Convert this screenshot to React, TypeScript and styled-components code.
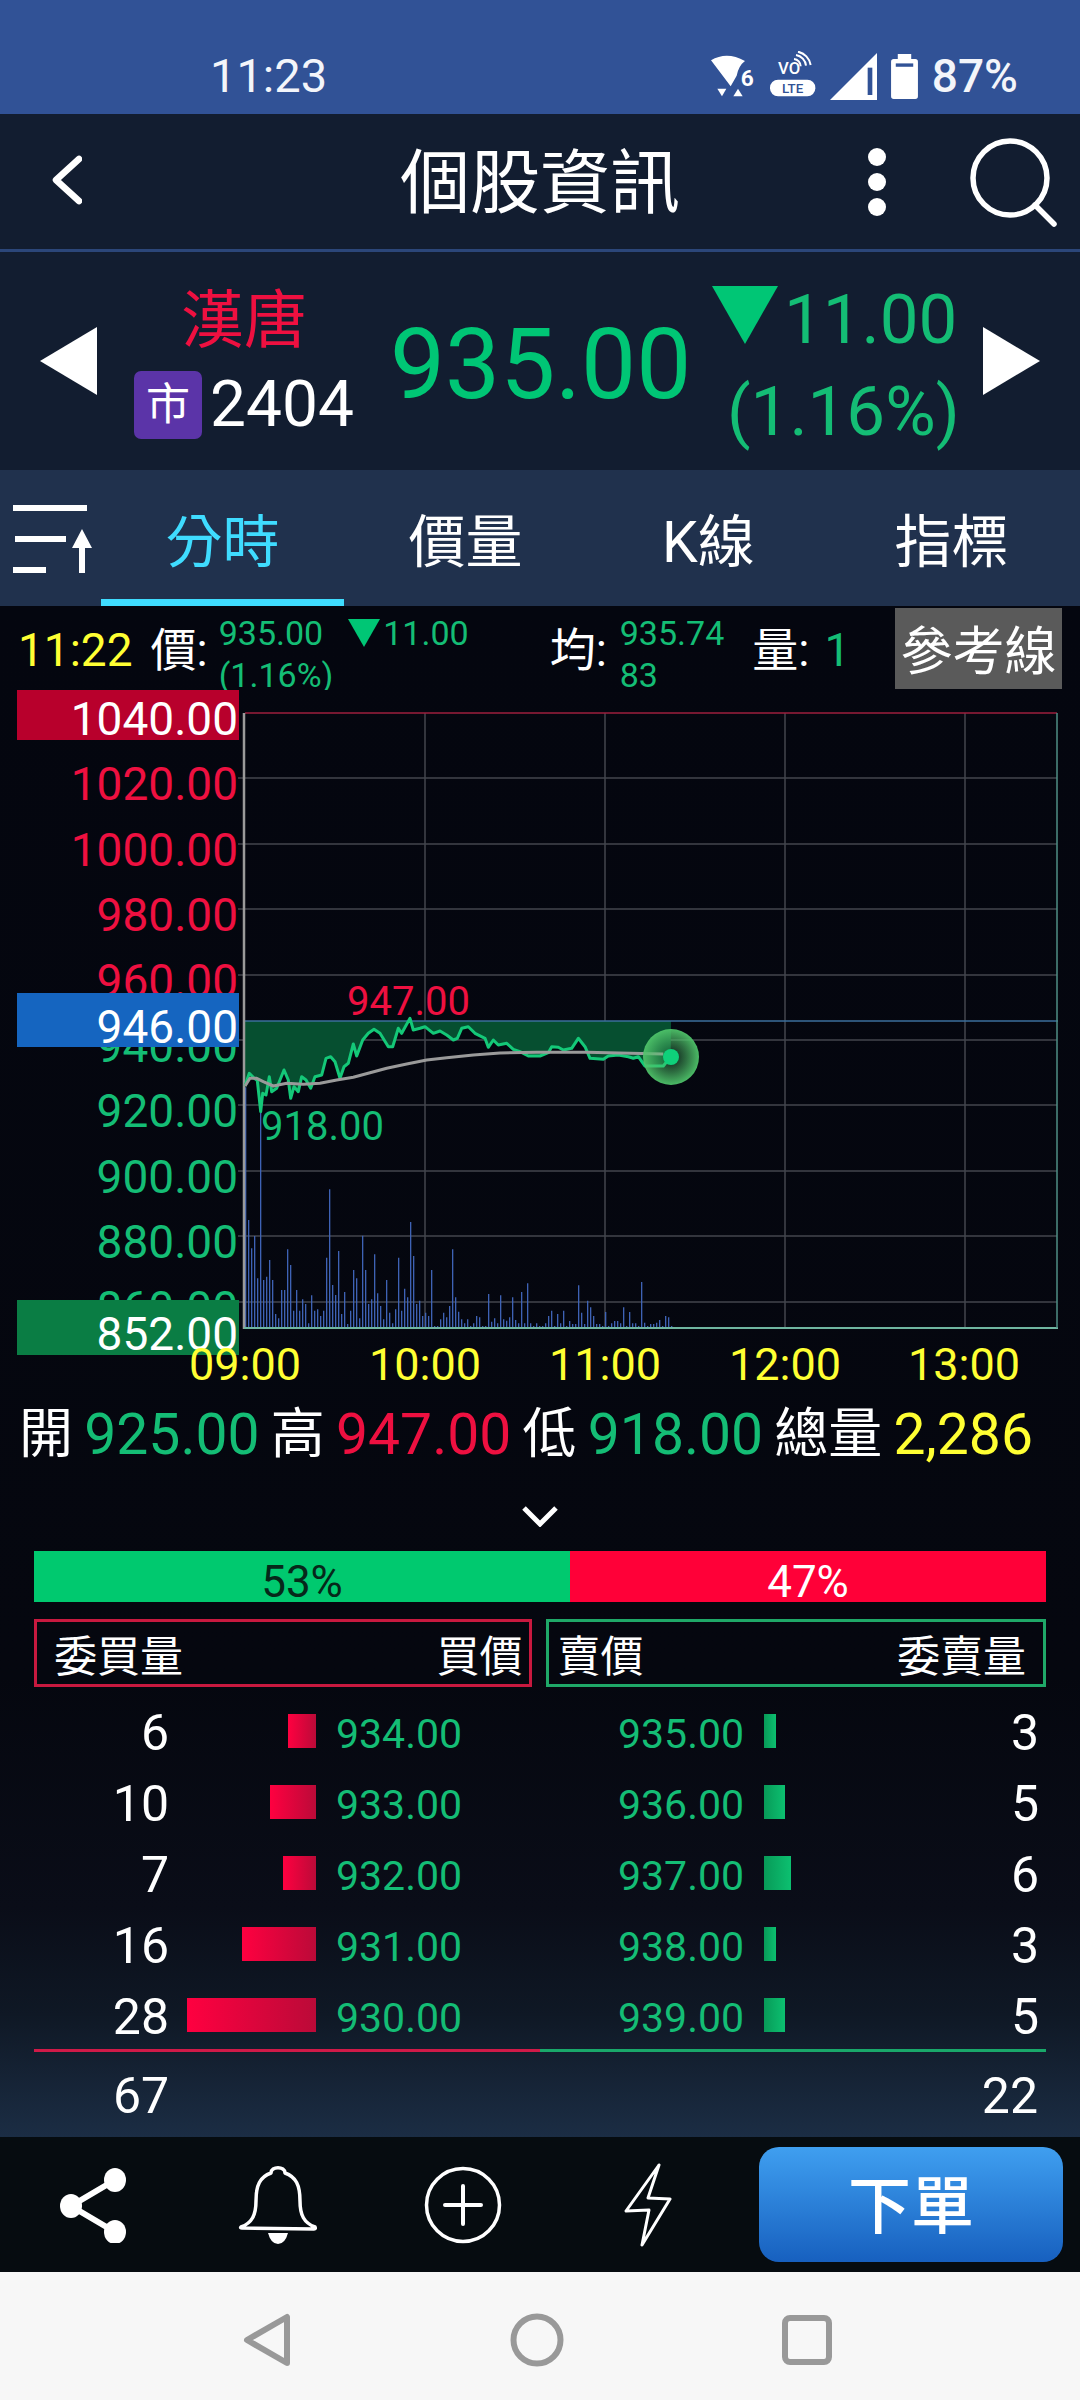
import React from "react";
import styled, { createGlobalStyle } from "styled-components";

const GlobalStyle = createGlobalStyle`
  html, body { margin: 0; padding: 0; background: #05070f; }
  * { box-sizing: border-box; }
  body { font-family: Roboto, "Noto Sans CJK TC", sans-serif; }
`;

const GREEN = "#00c675";
const SOFT_GREEN = "#14bd75";
const RED = "#ee1040";
const YELLOW = "#ffff33";

const Screen = styled.div`
  width: 1080px;
  height: 2400px;
  display: flex;
  flex-direction: column;
  overflow: hidden;
  color: #fff;
  font-family: Roboto, "Noto Sans CJK TC", sans-serif;
`;

/* status bar */
const StatusBar = styled.div`
  height: 114px;
  flex: none;
  background: #315296;
  display: flex;
  align-items: center;
  padding: 38px 62px 0 210px;
  color: #f3f5fa;
`;
const StatusTime = styled.div`
  font-size: 47px;
  line-height: 50px;
`;
const StatusIcons = styled.div`
  margin-left: auto;
  display: flex;
  align-items: center;
  gap: 14px;
`;
const StatusPct = styled.div`
  font-size: 46px;
  line-height: 50px;
  font-weight: 500;
`;

/* app header */
const Header = styled.div`
  height: 138px;
  flex: none;
  background: #121d30;
  border-bottom: 3px solid #2b4679;
  display: grid;
  grid-template-columns: 1fr auto 1fr;
  align-items: center;
  padding: 0 23px;
`;
const BackCell = styled.div`
  padding: 0 0 4px 29px;
  display: flex;
`;
const Title = styled.div`
  font-size: 70px;
  line-height: 80px;
  padding-top: 5px;
`;
const HeaderRight = styled.div`
  display: flex;
  justify-content: flex-end;
  align-items: center;
  gap: 82px;
`;

/* stock panel */
const StockPanel = styled.div`
  height: 218px;
  flex: none;
  background: #121d30;
  display: flex;
  align-items: center;
  padding-left: 40px;
`;
const NameCol = styled.div`
  margin-left: 37px;
  width: 220px;
  display: flex;
  flex-direction: column;
  align-items: center;
  margin-top: 8px;
`;
const StockName = styled.div`
  color: ${RED};
  font-size: 63px;
  line-height: 84px;
  margin-top: -12px;
`;
const CodeRow = styled.div`
  display: flex;
  align-items: center;
  gap: 8px;
  height: 68px;
  margin-top: 8px;
`;
const MarketBadge = styled.div`
  width: 68px;
  height: 68px;
  border-radius: 7px;
  background: #5b34a8;
  font-size: 44px;
  line-height: 68px;
  text-align: center;
`;
const StockCode = styled.div`
  font-size: 64px;
  line-height: 68px;
`;
const BigPrice = styled.div`
  margin-left: 36px;
  margin-top: 8px;
  width: 297px;
  color: ${GREEN};
  font-size: 98px;
  line-height: 100px;
  white-space: nowrap;
`;
const ChangeCol = styled.div`
  margin-left: 25px;
  width: 246px;
  display: flex;
  flex-direction: column;
  margin-top: 8px;
`;
const ChangeTop = styled.div`
  display: flex;
  align-items: flex-start;
  gap: 6px;
  height: 90px;
  font-size: 69px;
  line-height: 76px;
  color: ${SOFT_GREEN};
`;
const ChangeMark = styled.svg`
  margin-top: 8px;
  flex: none;
`;
const ChangeValue = styled.div`
  margin-top: 4px;
`;
const ChangePct = styled.div`
  font-size: 69px;
  line-height: 80px;
  color: ${SOFT_GREEN};
  padding-left: 15px;
  white-space: nowrap;
  margin-top: 4px;
`;
const PanelArrow = styled.svg`
  margin-left: 25px;
  flex: none;
`;

/* tabs */
const TabBar = styled.div`
  height: 136px;
  flex: none;
  background: #20314d;
  display: flex;
`;
const TabIconCell = styled.div`
  width: 101px;
  display: flex;
  padding: 34px 0 0 13px;
`;
const Tab = styled.div<{ $active?: boolean }>`
  width: 243px;
  text-align: center;
  font-size: 57px;
  line-height: 146px;
  color: ${(p) => (p.$active ? "#3fdcff" : "#fff")};
  border-bottom: 7px solid ${(p) => (p.$active ? "#3fdcff" : "transparent")};
  height: 136px;
`;

/* content */
const Content = styled.div`
  flex: 1;
  display: flex;
  flex-direction: column;
  background: linear-gradient(180deg, #04060f 0%, #05070f 70%, #0a0d18 85%, #0f1825 92%, #1b2d44 100%);
`;
const InfoRow = styled.div`
  height: 84px;
  flex: none;
  position: relative;
  display: flex;
  overflow: hidden;
  padding-left: 18px;
`;
const InfoMain = styled.div<{ $color?: string; $ml?: number }>`
  color: ${(p) => p.$color || "#fff"};
  font-size: 46px;
  line-height: 88px;
  margin-left: ${(p) => p.$ml || 0}px;
  white-space: nowrap;
`;
const InfoSmall = styled.div<{ $ml?: number }>`
  margin-left: ${(p) => p.$ml || 0}px;
  color: ${SOFT_GREEN};
  font-size: 34px;
  line-height: 42px;
  padding-top: 6px;
  white-space: nowrap;
`;
const InfoSmallRow = styled.div`
  display: flex;
  align-items: center;
`;
const InfoMark = styled.svg`
  margin: 0 3px 0 25px;
`;
const RefButton = styled.div`
  position: absolute;
  right: 18px;
  top: 2px;
  width: 167px;
  height: 81px;
  background: #5a5a5a;
  font-size: 52px;
  line-height: 89px;
  text-align: center;
  white-space: nowrap;
`;

const ChartWrap = styled.div`
  height: 700px;
  flex: none;
  position: relative;
`;
const ChartSvg = styled.svg`
  display: block;
`;
const AxisLabel = styled.div<{ $color: string }>`
  position: absolute;
  right: 842px;
  font-size: 46px;
  line-height: 50px;
  color: ${(p) => p.$color};
  white-space: nowrap;
`;
const AxisTag = styled.div<{ $bg: string }>`
  position: absolute;
  left: 17px;
  width: 222px;
  background: ${(p) => p.$bg};
  color: #fff;
  font-size: 46px;
  text-align: right;
  padding-right: 1px;
  white-space: nowrap;
`;
const PeakLabel = styled.div<{ $color: string }>`
  position: absolute;
  font-size: 40px;
  line-height: 46px;
  color: ${(p) => p.$color};
`;
const TimeLabel = styled.div`
  position: absolute;
  width: 120px;
  margin-left: -60px;
  text-align: center;
  font-size: 45px;
  line-height: 50px;
  color: ${YELLOW};
`;

const StatsRow = styled.div`
  height: 90px;
  flex: none;
  display: flex;
  align-items: center;
  justify-content: space-between;
  padding: 0 47px 0 19px;
`;
const StatLabel = styled.div`
  font-size: 54px;
  line-height: 64px;
  white-space: nowrap;
`;
const StatValue = styled.div<{ $color: string }>`
  font-size: 57px;
  line-height: 64px;
  color: ${(p) => p.$color};
`;
const ChevronRow = styled.div`
  height: 71px;
  flex: none;
  display: flex;
  justify-content: center;
  align-items: center;
`;
const RatioBar = styled.div`
  height: 51px;
  flex: none;
  margin: 0 34px;
  display: flex;
`;
const RatioPart = styled.div<{ $bg: string; $w: number; $fg: string }>`
  width: ${(p) => p.$w}px;
  background: ${(p) => p.$bg};
  color: ${(p) => p.$fg};
  font-size: 44px;
  line-height: 62px;
  height: 51px;
  text-align: center;
  overflow: visible;
`;
const BookHead = styled.div`
  margin: 17px 34px 0;
  height: 68px;
  flex: none;
  display: flex;
  gap: 14px;
`;
const BookHeadBox = styled.div<{ $c: string; $left?: boolean }>`
  flex: 1;
  border: 3px solid ${(p) => p.$c};
  display: flex;
  align-items: center;
  justify-content: space-between;
  padding: 0 ${(p) => (p.$left ? "6px 0 17px" : "17px 0 9px")};
  font-size: 43px;
  white-space: nowrap;
`;
const BookRows = styled.div`
  margin-top: 7px;
  display: flex;
  flex-direction: column;
`;
const BookRow = styled.div`
  height: 71px;
  flex: none;
  padding: 3px 34px 0;
  display: grid;
  grid-template-columns: 506px 506px;
  align-items: center;
`;
const BidSide = styled.div`
  display: grid;
  grid-template-columns: 135px 147px 1fr;
  align-items: center;
`;
const AskSide = styled.div`
  display: grid;
  grid-template-columns: 125px 1fr auto;
  padding: 0 7px 0 78px;
  align-items: center;
`;
const Qty = styled.div`
  font-size: 50px;
  line-height: 60px;
  text-align: right;
  padding-top: 4px;
`;
const Price = styled.div<{ $pad?: number }>`
  font-size: 41px;
  line-height: 60px;
  color: ${SOFT_GREEN};
  padding-left: ${(p) => p.$pad || 0}px;
  padding-top: 5px;
`;
const BidBarCell = styled.div`
  display: flex;
  justify-content: flex-end;
`;
const AskBarCell = styled.div`
  display: flex;
  padding-left: 21px;
`;
const BidBar = styled.div`
  height: 34px;
  background: linear-gradient(90deg, #ff0040, #bb0a38);
`;
const AskBar = styled.div`
  height: 34px;
  background: linear-gradient(90deg, #089a58, #0cc070);
`;
const SplitLine = styled.div`
  margin: 0 34px;
  height: 3px;
  flex: none;
  background: linear-gradient(90deg, #d01a48 50%, #19a86a 50%);
`;
const TotalRow = styled.div`
  flex: 1;
  display: flex;
  justify-content: space-between;
  align-items: center;
  padding: 3px 42px 0 113px;
  font-size: 50px;
`;

/* bottom */
const BottomBar = styled.div`
  height: 135px;
  flex: none;
  background: #060c10;
  display: flex;
  align-items: center;
`;
const ActionCell = styled.div`
  width: 185px;
  display: flex;
  justify-content: center;
`;
const OrderButton = styled.div`
  margin-left: 19px;
  width: 304px;
  height: 115px;
  border-radius: 20px;
  background: linear-gradient(180deg, #3f9ff0 0%, #1760bf 100%);
  font-size: 63px;
  font-weight: 500;
  line-height: 120px;
  text-align: center;
`;
const NavBar = styled.div`
  height: 128px;
  flex: none;
  background: #f7f7f7;
  display: flex;
  justify-content: center;
  align-items: center;
  padding: 8px 6px 0 0;
`;
const NavCell = styled.div`
  width: 270px;
  display: flex;
  justify-content: center;
`;

/* data */
const zx = (x: number) => 220 + x / 3;
const zy = (y: number) => 960 + y / 3 - 690;

const pricePts: [number, number][] = [
  [75,378],[88,340],[100,352],[112,362],[122,455],[128,400],[138,405],[148,350],[155,395],[170,385],[192,330],[205,360],[212,415],[222,380],[235,395],[245,350],[258,360],[272,385],[285,350],[305,345],[318,295],[332,290],[345,305],[360,355],[372,320],[385,310],[400,252],[410,288],[428,240],[445,220],[462,208],[480,220],[505,260],[518,260],[535,205],[545,220],[570,175],[580,210],[600,205],[615,200],[640,220],[660,213],[680,225],[700,240],[712,235],[725,205],[745,200],[765,220],[795,235],[805,262],[820,240],[835,255],[860,250],[880,268],[900,275],[925,288],[960,288],[985,278],[995,260],[1015,262],[1030,270],[1055,265],[1075,235],[1095,260],[1110,295],[1150,298],[1165,288],[1195,285],[1225,290],[1240,295],[1255,290],[1275,318],[1330,318],[1352,290],
];
const avgPts: [number, number][] = [
  [75,378],[90,355],[110,355],[130,365],[160,378],[200,370],[250,373],[300,370],[350,360],[400,352],[450,338],[500,325],[560,312],[620,300],[680,293],[760,285],[840,279],[950,277],[1100,277],[1330,282],
];
const volTops = [
  382,780,865,828,955,455,960,950,900,960,1062,1075,990,990,868,915,1052,990,1052,1018,1032,1090,1006,1052,1048,1068,1052,893,688,975,1005,873,1062,996,1092,1052,930,955,1075,827,930,1032,1018,883,1000,1038,1078,960,1058,1090,1048,893,1052,986,1012,786,888,1032,1022,1068,1058,1068,930,1098,1098,1078,1058,1072,1038,868,1012,1055,1078,1090,1078,1098,1090,1068,1072,1098,1098,1002,1085,1075,1090,1006,1078,1082,1072,1012,1080,1090,996,1090,970,1090,1098,1090,1098,1098,1090,1068,1052,1098,1062,1090,1052,1098,1083,1092,1092,976,1058,1092,1022,1042,1068,1092,1092,1098,1056,1098,1090,1083,1083,1090,1042,1098,1056,1090,1090,1098,966,1088,1098,1092,1092,1088,1080,1098,1068,1072,1098,
];
const toPath = (pts: [number, number][]) =>
  pts.map(([x, y], i) => `${i ? "L" : "M"}${zx(x).toFixed(1)} ${zy(y).toFixed(1)}`).join(" ");

const hLines = [713, 778, 844, 909, 975, 1040, 1105, 1171, 1236, 1302];
const vLines = [425, 605, 785, 965];

const yLabels = [
  { t: "1020.00", y: 784, c: RED },
  { t: "1000.00", y: 850, c: RED },
  { t: "980.00", y: 915, c: RED },
  { t: "960.00", y: 981, c: RED },
  { t: "940.00", y: 1046, c: SOFT_GREEN },
  { t: "920.00", y: 1111, c: SOFT_GREEN },
  { t: "900.00", y: 1177, c: SOFT_GREEN },
  { t: "880.00", y: 1242, c: SOFT_GREEN },
  { t: "860.00", y: 1308, c: SOFT_GREEN },
];
const yTags = [
  { t: "1040.00", top: 690, h: 50, bg: "#b8002c", lh: 58 },
  { t: "946.00", top: 993, h: 54, bg: "#1565c0", lh: 68 },
  { t: "852.00", top: 1300, h: 55, bg: "#0a7d44", lh: 68 },
];
const times = [
  { t: "09:00", x: 245 },
  { t: "10:00", x: 425 },
  { t: "11:00", x: 605 },
  { t: "12:00", x: 785 },
  { t: "13:00", x: 964 },
];
const bids = [
  { q: 6, p: "934.00", w: 28 },
  { q: 10, p: "933.00", w: 46 },
  { q: 7, p: "932.00", w: 33 },
  { q: 16, p: "931.00", w: 74 },
  { q: 28, p: "930.00", w: 129 },
];
const asks = [
  { q: 3, p: "935.00", w: 12 },
  { q: 5, p: "936.00", w: 21 },
  { q: 6, p: "937.00", w: 27 },
  { q: 3, p: "938.00", w: 12 },
  { q: 5, p: "939.00", w: 21 },
];

const Chart = () => {
  const line = toPath(pricePts);
  const fillPts = [...pricePts].reverse().map(([x, y]) => `${zx(x).toFixed(1)},${zy(y).toFixed(1)}`).join(" ");
  return (
    <ChartSvg width={1080} height={700} viewBox="0 0 1080 700">
      <defs>
        <radialGradient id="halo" cx="50%" cy="50%" r="50%">
          <stop offset="0%" stopColor="#4fc46a" stopOpacity="0.1" />
          <stop offset="55%" stopColor="#4fc46a" stopOpacity="0.55" />
          <stop offset="100%" stopColor="#4fc46a" stopOpacity="0.95" />
        </radialGradient>
      </defs>
      {hLines.slice(1).map((y) => (
        <line key={y} x1={238} x2={1057} y1={y - 690} y2={y - 690} stroke="#43464e" strokeWidth={1.5} />
      ))}
      {vLines.map((x) => (
        <line key={x} x1={x} x2={x} y1={23} y2={638} stroke="#43464e" strokeWidth={1.5} />
      ))}
      <line x1={245} x2={1057} y1={23} y2={23} stroke="#9c1f3e" strokeWidth={1.5} />
      <polygon points={`245,331 671,331 ${fillPts}`} fill="#064f30" />
      <line x1={245} x2={1058} y1={331} y2={331} stroke="#3b6f9c" strokeWidth={1.5} />
      {volTops.map((t, i) => {
        const x = zx(77 + 9 * i);
        return <line key={i} x1={x} x2={x} y1={zy(t)} y2={638} stroke="#3f64b8" strokeWidth={1.3} />;
      })}
      <line x1={244} x2={244} y1={23} y2={639} stroke="#9a9a9a" strokeWidth={2.5} />
      <line x1={244} x2={1058} y1={638} y2={638} stroke="#6fb5a0" strokeWidth={2} />
      <line x1={1057} x2={1057} y1={23} y2={638} stroke="#4f8f86" strokeWidth={1.5} />
      <path d={line} fill="none" stroke="#14c878" strokeWidth={3} strokeLinejoin="round" />
      <path d={toPath(avgPts)} fill="none" stroke="#9a9a9a" strokeWidth={3} strokeLinejoin="round" />
      <circle cx={671} cy={367} r={28} fill="url(#halo)" />
      <circle cx={671} cy={367} r={8} fill="#0fd07a" />
    </ChartSvg>
  );
};

const BackIcon = () => (
  <svg width={30} height={50} viewBox="0 0 30 50" fill="none" stroke="#fff" strokeWidth={6.5} strokeLinecap="round" strokeLinejoin="round">
    <path d="M27 4 L4 25 L27 46" />
  </svg>
);
const DotsIcon = () => (
  <svg width={20} height={70} viewBox="0 0 20 70" fill="#fff">
    <circle cx={10} cy={10} r={9} />
    <circle cx={10} cy={35} r={9} />
    <circle cx={10} cy={60} r={9} />
  </svg>
);
const SearchIcon = () => (
  <svg width={88} height={90} viewBox="0 0 88 90" fill="none" stroke="#fff" strokeWidth={5.5} strokeLinecap="round">
    <circle cx={41} cy={41} r={37} />
    <path d="M66 68 L85 87" />
  </svg>
);
const ColumnsIcon = () => (
  <svg width={84} height={80} viewBox="0 0 84 80" fill="#fff">
    <rect x={0} y={1} width={74} height={6} />
    <rect x={2} y={32} width={51} height={6} />
    <rect x={0} y={63} width={33} height={6} />
    <path d="M69 25 L79 44 L72 44 L72 69 L66 69 L66 44 L59 44 Z" />
  </svg>
);
const WifiIcon = () => (
  <svg width={46} height={46} viewBox="0 0 138 138" fill="#fff">
    <path d="M3 22 Q50 -6 105 24 Q86 38 80 68 L62 100 Z" />
    <path d="M22 107 H49 L36 130 Z" />
    <path d="M70 130 L84 107 L98 130 Z" />
    <text x={92} y={100} fontFamily="Roboto" fontWeight={700} fontSize={68} fill="#fff">6</text>
  </svg>
);
const VolteIcon = () => (
  <svg width={46} height={50} viewBox="0 0 138 150" fill="#fff">
    <text x={24} y={68} fontFamily="Roboto" fontWeight={500} fontSize={50} fill="#fff">VO</text>
    <path d="M72 24 A22 22 0 0 1 92 46" fill="none" stroke="#fff" strokeWidth={6} />
    <path d="M78 12 A36 36 0 0 1 108 44" fill="none" stroke="#fff" strokeWidth={6} />
    <path d="M84 2 A50 50 0 0 1 122 42" fill="none" stroke="#fff" strokeWidth={6} />
    <rect x={0} y={86} width={136} height={50} rx={24} />
    <text x={68} y={126} textAnchor="middle" fontFamily="Roboto" fontWeight={500} fontSize={40} fill="#315296">LTE</text>
  </svg>
);
const SignalIcon = () => (
  <svg width={47} height={47} viewBox="0 0 141 141">
    <path d="M0 141 L141 0 V141 Z" fill="#fff" />
    <rect x={113} y={44} width={14} height={82} fill="#315296" />
  </svg>
);
const BatteryIcon = () => (
  <svg width={27} height={45} viewBox="0 0 80 134">
    <path d="M20 0 H60 V15 H72 Q80 15 80 23 V126 Q80 134 72 134 H8 Q0 134 0 126 V23 Q0 15 8 15 H20 Z" fill="#fff" />
    <rect x={14} y={28} width={52} height={10} fill="#315296" />
  </svg>
);
const ShareIcon = () => (
  <svg width={68} height={76} viewBox="0 0 68 76" fill="#fff" stroke="#fff">
    <path d="M56 13 L12 39 L56 65" fill="none" strokeWidth={6} />
    <ellipse cx={12} cy={39} rx={11} ry={12} stroke="none" />
    <ellipse cx={56} cy={13} rx={11} ry={12} stroke="none" />
    <ellipse cx={56} cy={65} rx={11} ry={12} stroke="none" />
  </svg>
);
const BellIcon = () => (
  <svg width={80} height={80} viewBox="0 0 80 80" fill="none" stroke="#fff" strokeWidth={3.5} strokeLinejoin="round">
    <path d="M3 62 C14 58 18 50 18 36 C18 20 22 12 33 8 C33 1 47 1 47 8 C58 12 62 20 62 36 C62 50 66 58 77 62 Q78 64 76 64 L4 63 Q2 63 3 62 Z" />
    <path d="M30 68 H50 Q47 79 40 79 Q33 79 30 68 Z" fill="#fff" stroke="none" />
  </svg>
);
const PlusIcon = () => (
  <svg width={78} height={78} viewBox="0 0 78 78" fill="none" stroke="#fff" strokeLinecap="round">
    <circle cx={39} cy={39} r={36.5} strokeWidth={3.5} />
    <path d="M21 39 H57 M39 20 V58" strokeWidth={4} />
  </svg>
);
const BoltIcon = () => (
  <svg width={48} height={84} viewBox="0 0 48 84" fill="none" stroke="#fff" strokeWidth={3} strokeLinejoin="round">
    <path d="M35 2 L2 48 L25 47 L18 82 L46 36 L24 35 Z" />
  </svg>
);
const NavBack = () => (
  <svg width={48} height={54} viewBox="0 0 48 54" fill="none" stroke="#999" strokeWidth={6} strokeLinejoin="round">
    <path d="M44 4 V50 L4 27 Z" />
  </svg>
);
const NavHome = () => (
  <svg width={54} height={54} viewBox="0 0 54 54" fill="none" stroke="#999" strokeWidth={6}>
    <circle cx={27} cy={27} r={23.5} />
  </svg>
);
const NavRecent = () => (
  <svg width={50} height={50} viewBox="0 0 50 50" fill="none" stroke="#999" strokeWidth={6}>
    <rect x={3} y={3} width={44} height={44} rx={5} />
  </svg>
);

export default function App() {
  return (
    <Screen>
      <GlobalStyle />
      <StatusBar>
        <StatusTime>11:23</StatusTime>
        <StatusIcons>
          <WifiIcon />
          <VolteIcon />
          <SignalIcon />
          <BatteryIcon />
          <StatusPct>87%</StatusPct>
        </StatusIcons>
      </StatusBar>

      <Header>
        <BackCell><BackIcon /></BackCell>
        <Title>個股資訊</Title>
        <HeaderRight>
          <DotsIcon />
          <SearchIcon />
        </HeaderRight>
      </Header>

      <StockPanel>
        <svg width={57} height={68} viewBox="0 0 57 68" fill="#fff">
          <path d="M57 0 V68 L0 34 Z" />
        </svg>
        <NameCol>
          <StockName>漢唐</StockName>
          <CodeRow>
            <MarketBadge>市</MarketBadge>
            <StockCode>2404</StockCode>
          </CodeRow>
        </NameCol>
        <BigPrice>935.00</BigPrice>
        <ChangeCol>
          <ChangeTop>
            <ChangeMark width={66} height={58} viewBox="0 0 66 58" fill={GREEN}>
              <path d="M0 0 H66 L33 58 Z" />
            </ChangeMark>
            <ChangeValue>11.00</ChangeValue>
          </ChangeTop>
          <ChangePct>(1.16%)</ChangePct>
        </ChangeCol>
        <PanelArrow width={57} height={68} viewBox="0 0 57 68" fill="#fff">
          <path d="M0 0 V68 L57 34 Z" />
        </PanelArrow>
      </StockPanel>

      <TabBar>
        <TabIconCell><ColumnsIcon /></TabIconCell>
        <Tab $active>分時</Tab>
        <Tab>價量</Tab>
        <Tab>K線</Tab>
        <Tab>指標</Tab>
      </TabBar>

      <Content>
        <InfoRow>
          <InfoMain $color={YELLOW}>11:22</InfoMain>
          <InfoMain $ml={18}>價:</InfoMain>
          <InfoSmall $ml={11}>
            <InfoSmallRow>
              935.00
              <InfoMark width={32} height={28} viewBox="0 0 32 28" fill={GREEN}>
                <path d="M0 0 H32 L16 28 Z" />
              </InfoMark>
              11.00
            </InfoSmallRow>
            <div>(1.16%)</div>
          </InfoSmall>
          <InfoMain $ml={81}>均:</InfoMain>
          <InfoSmall $ml={13}>
            <div>935.74</div>
            <div>83</div>
          </InfoSmall>
          <InfoMain $ml={28}>量:</InfoMain>
          <InfoMain $ml={15} $color={SOFT_GREEN}>1</InfoMain>
          <RefButton>參考線</RefButton>
        </InfoRow>

        <ChartWrap>
          <Chart />
          {yLabels.map((l) => (
            <AxisLabel key={l.t} $color={l.c} style={{ top: l.y - 690 - 25 }}>{l.t}</AxisLabel>
          ))}
          {yTags.map((l) => (
            <AxisTag key={l.t} $bg={l.bg} style={{ top: l.top - 690, height: l.h, lineHeight: `${l.lh}px` }}>{l.t}</AxisTag>
          ))}
          <PeakLabel $color={RED} style={{ left: 347, top: 289 }}>947.00</PeakLabel>
          <PeakLabel $color={SOFT_GREEN} style={{ left: 261, top: 414 }}>918.00</PeakLabel>
          {times.map((t) => (
            <TimeLabel key={t.t} style={{ left: t.x, top: 650 }}>{t.t}</TimeLabel>
          ))}
        </ChartWrap>

        <StatsRow>
          <StatLabel>開</StatLabel>
          <StatValue $color={SOFT_GREEN}>925.00</StatValue>
          <StatLabel>高</StatLabel>
          <StatValue $color={RED}>947.00</StatValue>
          <StatLabel>低</StatLabel>
          <StatValue $color={SOFT_GREEN}>918.00</StatValue>
          <StatLabel>總量</StatLabel>
          <StatValue $color={YELLOW}>2,286</StatValue>
        </StatsRow>

        <ChevronRow>
          <svg width={36} height={22} viewBox="0 0 36 22" fill="none" stroke="#fff" strokeWidth={5}>
            <path d="M2 3 L18 19 L34 3" />
          </svg>
        </ChevronRow>

        <RatioBar>
          <RatioPart $bg="#00c96f" $w={536} $fg="#06281a">53%</RatioPart>
          <RatioPart $bg="#ff0038" $w={476} $fg="#fff">47%</RatioPart>
        </RatioBar>

        <BookHead>
          <BookHeadBox $c="#c8193f" $left>
            <span>委買量</span>
            <span>買價</span>
          </BookHeadBox>
          <BookHeadBox $c="#1fa868">
            <span>賣價</span>
            <span>委賣量</span>
          </BookHeadBox>
        </BookHead>

        <BookRows>
          {bids.map((b, i) => (
            <BookRow key={b.p}>
              <BidSide>
                <Qty>{b.q}</Qty>
                <BidBarCell><BidBar style={{ width: b.w }} /></BidBarCell>
                <Price $pad={20}>{b.p}</Price>
              </BidSide>
              <AskSide>
                <Price>{asks[i].p}</Price>
                <AskBarCell><AskBar style={{ width: asks[i].w }} /></AskBarCell>
                <Qty>{asks[i].q}</Qty>
              </AskSide>
            </BookRow>
          ))}
        </BookRows>
        <SplitLine />
        <TotalRow>
          <span>67</span>
          <span>22</span>
        </TotalRow>
      </Content>

      <BottomBar>
        <ActionCell><ShareIcon /></ActionCell>
        <ActionCell><BellIcon /></ActionCell>
        <ActionCell><PlusIcon /></ActionCell>
        <ActionCell><BoltIcon /></ActionCell>
        <OrderButton>下單</OrderButton>
      </BottomBar>
      <NavBar>
        <NavCell><NavBack /></NavCell>
        <NavCell><NavHome /></NavCell>
        <NavCell><NavRecent /></NavCell>
      </NavBar>
    </Screen>
  );
}
